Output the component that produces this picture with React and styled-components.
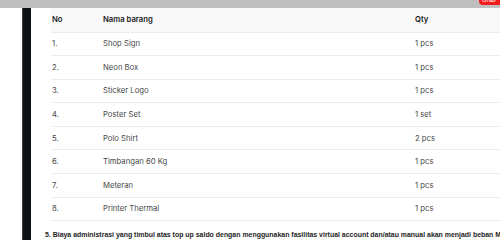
import React from "react";
import styled, { createGlobalStyle } from "styled-components";

const items = [
  { no: "1.", name: "Shop Sign", qty: "1 pcs" },
  { no: "2.", name: "Neon Box", qty: "1 pcs" },
  { no: "3.", name: "Sticker Logo", qty: "1 pcs" },
  { no: "4.", name: "Poster Set", qty: "1 set" },
  { no: "5.", name: "Polo Shirt", qty: "2 pcs" },
  { no: "6.", name: "Timbangan 60 Kg", qty: "1 pcs" },
  { no: "7.", name: "Meteran", qty: "1 pcs" },
  { no: "8.", name: "Printer Thermal", qty: "1 pcs" },
];

const App = () => {
  return (
    <Page>
      <GlobalStyle />
      <TopShade>
        <Badge>Grab</Badge>
      </TopShade>
      <Main>
        <SideBar />
        <Content>
          <Table>
            <colgroup>
              <col style={{ width: 51 }} />
              <col style={{ width: 312 }} />
              <col />
            </colgroup>
            <thead>
              <HeadRow>
                <HeadCell>No</HeadCell>
                <HeadCell>Nama barang</HeadCell>
                <HeadCell>Qty</HeadCell>
              </HeadRow>
            </thead>
            <tbody>
              {items.map((item) => (
                <Row key={item.no}>
                  <Cell>{item.no}</Cell>
                  <Cell>{item.name}</Cell>
                  <Cell>{item.qty}</Cell>
                </Row>
              ))}
            </tbody>
          </Table>
          <Note>
            5. Biaya administrasi yang timbul atas top up saldo dengan
            menggunakan fasilitas virtual account dan/atau manual akan menjadi
            beban Merchant
          </Note>
        </Content>
      </Main>
    </Page>
  );
};

export default App;

const GlobalStyle = createGlobalStyle`
  body {
    margin: 0;
    background: #fff;
    overflow: hidden;
  }
`;

const Page = styled.div`
  width: 500px;
  height: 240px;
  overflow: hidden;
  display: flex;
  flex-direction: column;
  font-family: Inter, "Noto Sans", sans-serif;
`;

const TopShade = styled.div`
  position: relative;
  height: 8px;
  flex-shrink: 0;
  background: #bfbfbf;
`;

const Badge = styled.div`
  position: absolute;
  top: -6px;
  right: -8px;
  width: 26px;
  height: 11px;
  border-radius: 4px;
  background: #f21c1c;
  color: #fff;
  font-size: 6px;
  line-height: 11px;
  padding-left: 3px;
  overflow: hidden;
`;

const Main = styled.div`
  flex: 1;
  display: flex;
  padding-left: 22px;
`;

const SideBar = styled.div`
  width: 9px;
  flex-shrink: 0;
  background: #0b1115;
  border-left: 1px solid #3a3f42;
  box-sizing: border-box;
`;

const Content = styled.div`
  flex: 1;
  min-width: 0;
  padding-left: 14px;
`;

const Table = styled.table`
  margin-left: 6px;
  width: 460px;
  table-layout: fixed;
  border-collapse: collapse;
  font-size: 7.7px;
`;

const HeadRow = styled.tr`
  height: 24px;
  background: #f8f8f8;
`;

const HeadCell = styled.th`
  padding: 0 0 0 1px;
  text-align: left;
  font-weight: 600;
  color: #1a1a1a;
`;

const Row = styled.tr`
  height: 23.6px;
  border-top: 1px solid #ececec;
  &:last-child {
    border-bottom: 1px solid #ececec;
  }
`;

const Cell = styled.td`
  padding: 0 0 0 1px;
  color: #484848;
`;

const Note = styled.div`
  margin-top: 10px;
  white-space: nowrap;
  font-family: "Liberation Sans", Arial, sans-serif;
  font-weight: 700;
  font-size: 6.95px;
  color: #1e1e1e;
`;
